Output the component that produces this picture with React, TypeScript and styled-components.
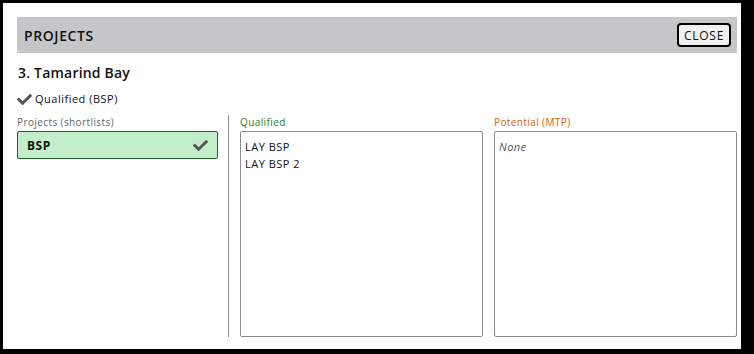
import styled, { createGlobalStyle } from "styled-components";
import { FaCheck } from "react-icons/fa";

const GlobalStyle = createGlobalStyle`
  html, body {
    margin: 0;
    padding: 0;
    background: #000;
    overflow: hidden;
  }
  body {
    font-family: "Open Sans", "Liberation Sans", sans-serif;
    color: #111;
  }
`;

const qualified = ["LAY BSP", "LAY BSP 2"];
const potential: string[] = [];

export default function App() {
  return (
    <>
      <GlobalStyle />
      <Modal>
        <Header>
          <HeaderTitle>PROJECTS</HeaderTitle>
          <CloseButton>CLOSE</CloseButton>
        </Header>
        <SiteName>3. Tamarind Bay</SiteName>
        <Status>
          <FaCheck size={15} color="#555" />
          Qualified (BSP)
        </Status>
        <Columns>
          <Column>
            <Label>Projects (shortlists)</Label>
            <Shortlist>
              BSP
              <FaCheck size={15} color="#555" />
            </Shortlist>
          </Column>
          <Divider />
          <Column>
            <Label tone="#2e7d32">Qualified</Label>
            <ListBox>
              {qualified.map((q) => (
                <Item key={q}>{q}</Item>
              ))}
            </ListBox>
          </Column>
          <Column>
            <Label tone="#d2620c">Potential (MTP)</Label>
            <ListBox>
              {potential.length === 0 ? <Empty>None</Empty> : potential.map((p) => <Item key={p}>{p}</Item>)}
            </ListBox>
          </Column>
        </Columns>
      </Modal>
    </>
  );
}

const Modal = styled.div`
  margin: 3px 0 0 3px;
  width: 738px;
  height: 346px;
  box-sizing: border-box;
  background: #fff;
  padding: 14px 4px 12px 14px;
  display: flex;
  flex-direction: column;
`;

const Header = styled.div`
  height: 36px;
  background: #c5c6c8;
  display: flex;
  align-items: center;
  justify-content: space-between;
  padding: 0 6px 0 7px;
`;

const HeaderTitle = styled.div`
  font-size: 14px;
  font-weight: 600;
  letter-spacing: 0.6px;
  color: #111;
`;

const CloseButton = styled.button`
  height: 24px;
  padding: 0 5px;
  border: 2px solid #000;
  border-radius: 4px;
  background: #efefef;
  font-family: inherit;
  font-size: 12px;
  letter-spacing: 0.7px;
  color: #111;
  cursor: pointer;
`;

const SiteName = styled.div`
  margin-top: 11px;
  padding-left: 1px;
  font-size: 14px;
  font-weight: 600;
  letter-spacing: 0.2px;
  line-height: 18px;
`;

const Status = styled.div`
  margin-top: 9px;
  display: flex;
  align-items: center;
  gap: 3px;
  font-size: 11px;
  letter-spacing: 0.5px;
  line-height: 16px;
`;

const Columns = styled.div`
  margin-top: 8px;
  flex: 1;
  display: flex;
  gap: 11px;
`;

const Column = styled.div`
  display: flex;
  flex-direction: column;
  &:first-child {
    width: 201px;
  }
  &:not(:first-child) {
    flex: 1;
  }
`;

const Divider = styled.div`
  width: 1px;
  background: #8a8c90;
  margin-left: -1px;
`;

const Label = styled.div<{ tone?: string }>`
  font-size: 10px;
  letter-spacing: 0.4px;
  line-height: 14px;
  color: ${(p) => p.tone ?? "#666"};
  margin-bottom: 2px;
`;

const Shortlist = styled.div`
  height: 28px;
  box-sizing: border-box;
  background: #c2efca;
  border: 1px solid #245f30;
  border-radius: 2px;
  display: flex;
  align-items: center;
  justify-content: space-between;
  padding: 0 9px 0 9px;
  font-size: 12px;
  font-weight: 700;
  letter-spacing: 0.5px;
`;

const ListBox = styled.div`
  flex: 1;
  border: 1px solid #8a8c90;
  border-radius: 2px;
  padding: 6px 4px;
`;

const Item = styled.div`
  font-size: 11px;
  letter-spacing: 0.5px;
  line-height: 17px;
`;

const Empty = styled.div`
  font-size: 11px;
  letter-spacing: 0.4px;
  line-height: 17px;
  font-style: italic;
  color: #555;
`;
